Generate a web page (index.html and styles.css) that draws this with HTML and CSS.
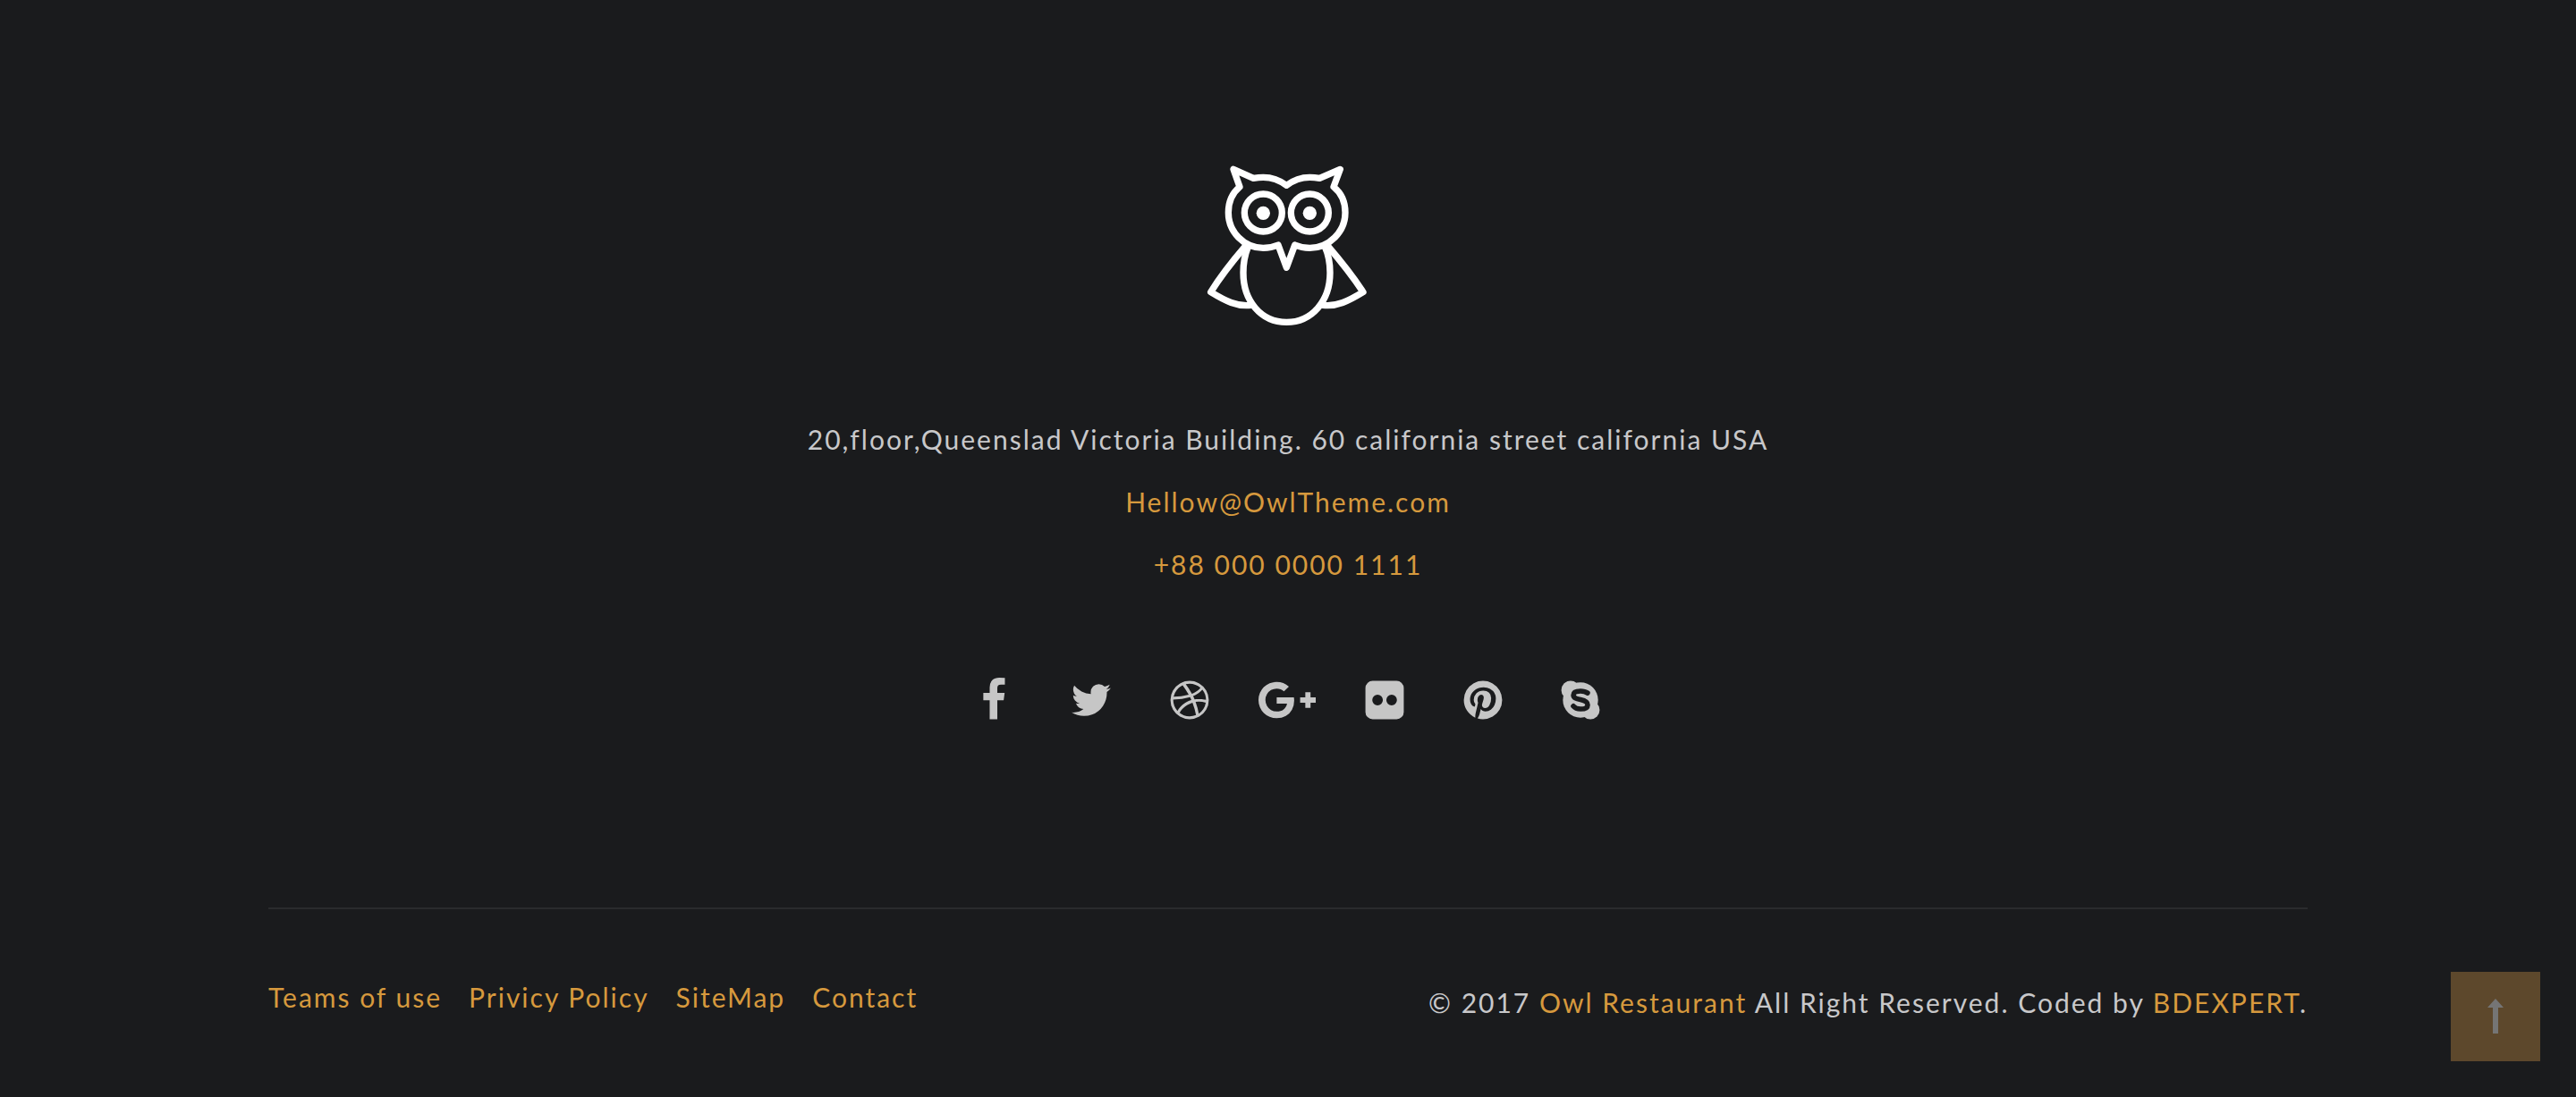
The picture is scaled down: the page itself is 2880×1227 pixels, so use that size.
FILE: index.html
```html
<!DOCTYPE html>
<html lang="en">
<head>
<meta charset="utf-8">
<meta name="viewport" content="width=device-width, initial-scale=1">
<title>Owl Restaurant</title>
<link rel="stylesheet" href="styles.css">
</head>
<body>
<footer class="footer">
  <div class="container">
    <div class="contact">
      <svg class="logo" viewBox="0 0 660 630" role="img" aria-label="Owl Restaurant">
        <g fill="none" stroke="#fff" stroke-width="22" stroke-linejoin="round" stroke-linecap="round">
          <path d="M325 112C300 93 278 85 247 85C236 85 226 86 214 88L147 58L168 117C144 137 130 167 130 203C130 268 182 322 247 322C265 322 281 319 297 312L325 388L353 312C369 319 385 322 403 322C468 322 522 268 522 203C522 167 508 137 483 117L505 58L436 88C424 86 414 85 403 85C372 85 350 93 325 112Z"/>
          <circle cx="247" cy="204" r="63"/>
          <circle cx="403" cy="204" r="63"/>
          <path d="M196 318C185 345 180 375 180 405C180 500 240 571 325 571C410 571 471 500 471 405C471 375 466 345 454 318"/>
          <path d="M188 315C145 365 105 415 71 470C120 500 160 520 206 514M463 315C506 365 546 415 582 470C533 500 493 520 447 514"/>
        </g>
        <circle cx="247" cy="205" r="23" fill="#fff"/>
        <circle cx="403" cy="205" r="23" fill="#fff"/>
      </svg>
      <address class="address">
        <p>20,floor,Queenslad Victoria Building. 60 california street california USA</p>
        <p><a href="mailto:Hellow@OwlTheme.com">Hellow@OwlTheme.com</a></p>
        <p><a href="tel:+8800000001111">+88 000 0000 1111</a></p>
      </address>
      <ul class="social">
        <li><a href="#" aria-label="Facebook"><svg class="icon" viewBox="0 0 1792 1792"><path d="M1343 12v264h-157q-86 0-116 36t-30 108v189h293l-39 296h-254v759h-306v-759h-255v-296h255v-218q0-186 104-288.5t277-102.5q147 0 228 12z"/></svg></a></li>
        <li><a href="#" aria-label="Twitter"><svg class="icon" viewBox="0 0 1792 1792"><path d="M1684 408q-67 98-162 167 1 14 1 42 0 130-38 259.5t-115.5 248.5-184.5 210.5-258 146-323 54.5q-271 0-496-145 35 4 78 4 225 0 401-138-105-2-188-64.5t-114-159.5q33 5 61 5 43 0 85-11-112-23-185.5-111.5t-73.5-205.5v-4q68 38 146 41-66-44-105-115t-39-154q0-88 44-163 121 149 294.5 238.5t371.5 99.5q-8-38-8-74 0-134 94.5-228.5t228.5-94.5q140 0 236 102 109-21 205-78-37 115-142 178 93-10 186-50z"/></svg></a></li>
        <li><a href="#" aria-label="Dribbble"><svg class="icon" viewBox="0 0 1792 1792"><path d="M1152 1500q-42-241-140-498h-2l-2 1q-16 6-43 16.5t-101 49-137 82-131 114.5-103 148l-15-11q184 150 418 150 132 0 256-52zm-185-607q-21-49-53-111-311 93-673 93-1 7-1 21 0 124 44 236.5t124 201.5q50-89 123.5-166.5t142.5-124.5 130.5-81 99.5-48l37-13q4-1 13-3.5t13-4.5zm-107-212q-120-213-244-378-138 65-234 186t-128 272q302 0 606-80zm684 319q-210-60-409-29 87 239 128 469 111-75 185-189.5t96-250.5zm-805-741q-1 0-2 1 1-1 2-1zm590 145q-185-164-433-164-76 0-155 19 131 170 246 382 69-26 130-60.5t96.5-61.5 65.5-57 37.5-40.5zm223 485q-3-232-149-410l-1 1q-9 12-19 24.5t-43.5 44.5-71 60.5-100 65-131.5 64.5q25 53 44 95 2 6 6.5 17.5t7.5 16.5q36-5 74.5-7t73.5-2 69 1.5 64 4 56.5 5.5 48 6.5 36.5 6 25 4.5zm112 7q0 209-103 385.5t-279.5 279.5-385.5 103-385.5-103-279.5-279.5-103-385.5 103-385.5 279.5-279.5 385.5-103 385.5 103 279.5 279.5 103 385.5z"/></svg></a></li>
        <li><a href="#" aria-label="Google Plus"><svg class="icon icon-wide" viewBox="0 0 2304 1792"><path d="M1437 913q0 208-87 370.5t-248 254-369 91.5q-149 0-285-58t-234-156-156-234-58-285 58-285 156-234 234-156 285-58q286 0 491 192l-199 191q-117-113-292-113-123 0-227.5 62t-165.5 168.5-61 232.5 61 232.5 165.5 168.5 227.5 62q83 0 152.5-23t114.5-57.5 78.5-78.5 49-83 21.5-74h-416v-252h692q12 63 12 122zm867-122v210h-209v209h-210v-209h-209v-210h209v-209h210v209h209z"/></svg></a></li>
        <li><a href="#" aria-label="Flickr"><svg class="icon" viewBox="0 0 1792 1792"><path d="M1376 128q119 0 203.5 84.5t84.5 203.5v960q0 119-84.5 203.5t-203.5 84.5h-960q-119 0-203.5-84.5t-84.5-203.5v-960q0-119 84.5-203.5t203.5-84.5h960zm-550 768q0-88-62-150t-150-62-150 62-62 150 62 150 150 62 150-62 62-150zm564 0q0-88-62-150t-150-62-150 62-62 150 62 150 150 62 150-62 62-150z"/></svg></a></li>
        <li><a href="#" aria-label="Pinterest"><svg class="icon" viewBox="0 0 1792 1792"><path d="M1664 896q0 209-103 385.5t-279.5 279.5-385.5 103q-111 0-218-32 59-93 78-164 9-34 54-211 20 39 73 67.5t114 28.5q121 0 216-68.5t147-188.5 52-270q0-114-59.5-214t-172.5-163-255-63q-105 0-196 29t-154.5 77-109 110.5-67 129.5-21.5 134q0 104 40 183t117 111q30 12 38-20 2-7 8-31t8-30q6-23-11-43-51-61-51-151 0-151 104.5-259.5t273.5-108.5q151 0 235.5 82t84.5 213q0 170-68.5 289t-175.5 119q-61 0-98-43.5t-23-104.5q8-35 26.5-93.5t30-103 11.5-75.5q0-50-27-83t-77-33q-62 0-105 57t-43 142q0 73 25 122l-99 418q-17 70-13 177-206-91-333-281t-127-423q0-209 103-385.5t279.5-279.5 385.5-103 385.5 103 279.5 279.5 103 385.5z"/></svg></a></li>
        <li><a href="#" aria-label="Skype"><svg class="icon" viewBox="0 0 1792 1792"><circle cx="896" cy="896" r="705"/><circle cx="500" cy="500" r="372"/><circle cx="1292" cy="1292" r="372"/><path class="icon-cut" d="M1180 614C1100 556 1010 536 896 536C730 536 612 590 612 700C612 810 730 846 896 880C1080 918 1184 972 1184 1090C1184 1210 1050 1256 896 1256C780 1256 670 1216 608 1140"/></svg></a></li>
      </ul>
    </div>
    <div class="bottom">
      <nav class="links" aria-label="Footer">
        <a href="#">Teams of use</a>
        <a href="#">Privicy Policy</a>
        <a href="#">SiteMap</a>
        <a href="#">Contact</a>
      </nav>
      <p class="copyright">© 2017 <a href="#">Owl Restaurant</a> All Right Reserved. Coded by <a href="#">BDEXPERT</a>.</p>
    </div>
  </div>
</footer>
<button class="to-top" type="button" aria-label="Back to top">
  <svg class="to-top-arrow" viewBox="0 0 18 40"><path d="M9 0L18 10H12V39H6V10H0Z"/></svg>
</button>
</body>
</html>
```
FILE: styles.css
```css
* {
  box-sizing: border-box;
}

body {
  margin: 0;
  background: #1a1b1d;
  color: #c8c8ca;
  font-family: Lato, "Liberation Sans", sans-serif;
  font-size: 30px;
  line-height: 50px;
  letter-spacing: 2px;
}

a {
  color: #d6993d;
  text-decoration: none;
}

p {
  margin: 0;
}

.container {
  max-width: 2360px;
  margin: 0 auto;
  padding: 0 40px;
}

.contact {
  display: flex;
  flex-direction: column;
  align-items: center;
  padding: 170px 0 207px;
}

.logo {
  width: 220px;
  height: 210px;
}

.address {
  display: grid;
  gap: 20px;
  margin-top: 86px;
  font-style: normal;
  text-align: center;
}

.social {
  display: grid;
  grid-template-columns: repeat(7, 1fr);
  width: 100%;
  max-width: 768px;
  margin: 102px 0 0;
  padding: 0 2px 0 0;
  list-style: none;
}

.social a {
  display: flex;
  justify-content: center;
}

.icon {
  width: 50px;
  height: 50px;
  fill: #c6c6c6;
}

.icon-wide {
  width: 64px;
}

.icon-cut {
  fill: none;
  stroke: #1a1b1d;
  stroke-width: 200;
  stroke-linecap: round;
}

.bottom {
  display: flex;
  flex-wrap: wrap;
  justify-content: space-between;
  border-top: 2px solid #2a2b2d;
  padding: 73px 0 60px;
}

.links {
  display: flex;
  flex-wrap: wrap;
  gap: 0 30px;
}

.copyright {
  padding-top: 6px;
}

.to-top {
  position: fixed;
  right: 40px;
  bottom: 40px;
  display: flex;
  align-items: center;
  justify-content: center;
  width: 100px;
  height: 100px;
  padding: 0;
  border: 0;
  background: #5d482c;
}

.to-top-arrow {
  width: 18px;
  height: 40px;
  fill: #757575;
}
```
